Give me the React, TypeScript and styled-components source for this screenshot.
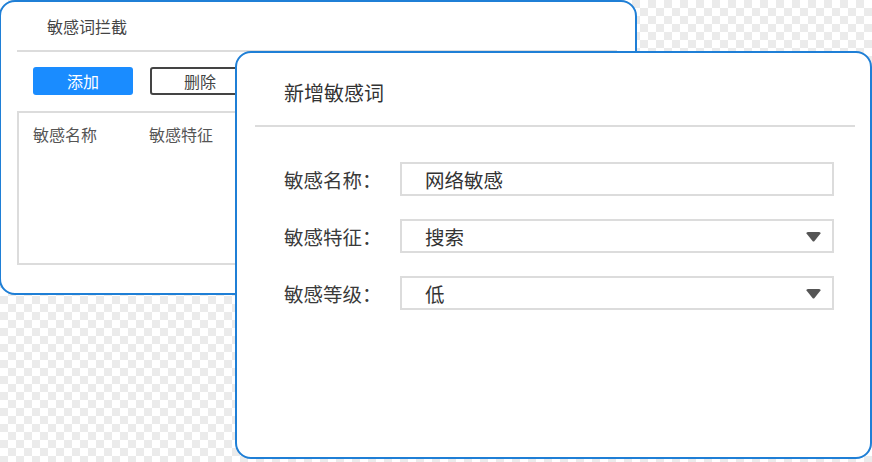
import React from 'react';
import styled, { createGlobalStyle } from 'styled-components';

const GlobalStyle = createGlobalStyle`
  html, body {
    margin: 0;
    padding: 0;
  }
  body {
    font-family: "Noto Sans CJK SC", "Noto Sans", sans-serif;
    color: #3c3c3c;
    background-color: #ffffff;
    background-image:
      linear-gradient(45deg, #ebebeb 25%, transparent 25%, transparent 75%, #ebebeb 75%),
      linear-gradient(45deg, #ebebeb 25%, transparent 25%, transparent 75%, #ebebeb 75%);
    background-size: 16px 16px;
    background-position: 0 0, 8px 8px;
  }
`;

const Desktop = styled.div`
  position: relative;
  width: 872px;
  height: 462px;
  overflow: hidden;
`;

const Window = styled.div<{ $left: number; $top: number; $width: number; $height: number }>`
  position: absolute;
  left: ${(p) => p.$left}px;
  top: ${(p) => p.$top}px;
  width: ${(p) => p.$width}px;
  height: ${(p) => p.$height}px;
  box-sizing: border-box;
  background: #ffffff;
  border: 2px solid #1f7fd6;
  border-radius: 16px;
  display: flex;
  flex-direction: column;
`;

const BackHeader = styled.div`
  height: 48px;
  display: flex;
  align-items: center;
  padding-left: 46px;
  font-size: 16px;
  color: #444;
`;

const Divider = styled.div<{ $ml: number; $mr: number }>`
  height: 2px;
  background: #dcdcdc;
  margin: 0 ${(p) => p.$mr}px 0 ${(p) => p.$ml}px;
`;

const Toolbar = styled.div`
  display: flex;
  gap: 17px;
  padding: 15px 0 0 32px;
`;

const Button = styled.button<{ $primary?: boolean }>`
  width: 100px;
  height: 28px;
  box-sizing: border-box;
  border-radius: 3px;
  font-family: inherit;
  font-size: 16px;
  padding: 0;
  cursor: pointer;
  background: ${(p) => (p.$primary ? '#1a8cff' : '#ffffff')};
  color: ${(p) => (p.$primary ? '#ffffff' : '#444')};
  border: ${(p) => (p.$primary ? 'none' : '2px solid #444')};
`;

const Table = styled.div`
  margin: 16px 18px 0 16px;
  height: 154px;
  box-sizing: border-box;
  border: 2px solid #dcdcdc;
`;

const TableHead = styled.div`
  display: grid;
  grid-template-columns: 116px 116px 1fr;
  padding: 9px 0 0 14px;
  font-size: 16px;
  color: #555;
`;

const ModalTitle = styled.div`
  height: 72px;
  display: flex;
  align-items: center;
  padding-left: 47px;
  padding-top: 6px;
  box-sizing: border-box;
  font-size: 20px;
  color: #333;
`;

const Form = styled.div`
  display: flex;
  flex-direction: column;
  gap: 23px;
  padding: 35px 0 0 47px;
`;

const FormRow = styled.div`
  display: flex;
  align-items: center;
`;

const Label = styled.div`
  width: 116px;
  font-size: 19.5px;
  color: #3a3a3a;
`;

const Field = styled.div`
  position: relative;
  width: 434px;
  height: 34px;
  box-sizing: border-box;
  border: 2px solid #dcdcdc;
  display: flex;
  align-items: center;
  padding-left: 23px;
  font-size: 19.5px;
  color: #333;
`;

const Caret = styled.svg`
  position: absolute;
  right: 11px;
  top: 11px;
`;

const fields = [
  { label: '敏感名称：', value: '网络敏感', select: false },
  { label: '敏感特征：', value: '搜索', select: true },
  { label: '敏感等级：', value: '低', select: true },
];

export default function App() {
  return (
    <>
      <GlobalStyle />
      <Desktop>
        <Window $left={-1} $top={0} $width={638} $height={295}>
          <BackHeader>敏感词拦截</BackHeader>
          <Divider $ml={16} $mr={18} />
          <Toolbar>
            <Button $primary>添加</Button>
            <Button>删除</Button>
          </Toolbar>
          <Table>
            <TableHead>
              <span>敏感名称</span>
              <span>敏感特征</span>
            </TableHead>
          </Table>
        </Window>

        <Window $left={235} $top={51} $width={637} $height={408}>
          <ModalTitle>新增敏感词</ModalTitle>
          <Divider $ml={18} $mr={15} />
          <Form>
            {fields.map((f) => (
              <FormRow key={f.label}>
                <Label>{f.label}</Label>
                <Field>
                  {f.value}
                  {f.select && (
                    <Caret width="15" height="10" viewBox="0 0 15 10">
                      <path d="M0.5 1.5 Q0 0 2 0 H13 Q15 0 14.5 1.5 L8.5 9 Q7.5 10 6.5 9 Z" fill="#555" />
                    </Caret>
                  )}
                </Field>
              </FormRow>
            ))}
          </Form>
        </Window>
      </Desktop>
    </>
  );
}
